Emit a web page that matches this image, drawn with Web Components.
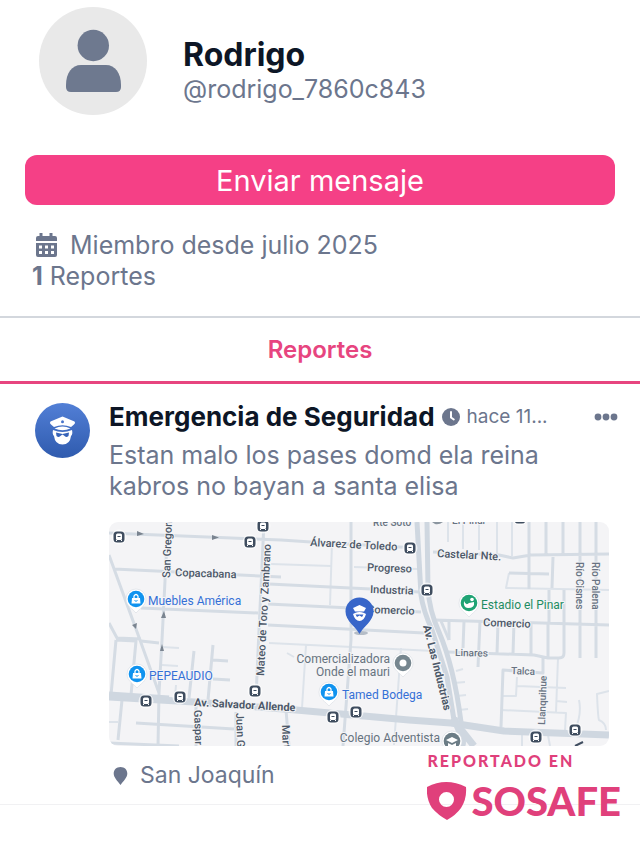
<!DOCTYPE html>
<html lang="es">
<head>
<meta charset="UTF-8">
<meta name="viewport" content="width=device-width, initial-scale=1">
<title>Rodrigo - SOSAFE</title>
<style>
body {
  margin: 0;
  background-color: #fff;
  color: #6c768d;
  font-family: Inter, "Liberation Sans", sans-serif;
}

main {
  padding-bottom: 36px;
}
</style>
</head>
<body>

<template id="profile-header">
<style>
  :host {
    display: flex;
    align-items: center;
    gap: 36px;
    padding: 7px 39px 0;
  }

  .avatar {
    flex: none;
    width: 108px;
    height: 108px;
  }

  .names {
    padding-top: 18px;
  }

  h1 {
    margin: 0;
    color: #0d1626;
    font-size: 32px;
    font-weight: 700;
    line-height: 38px;
  }

  p {
    margin: 0;
    font-size: 25px;
    line-height: 31px;
  }
</style>
<svg class="avatar" viewBox="0 0 108 108" aria-hidden="true">
<circle cx="54" cy="54" r="54" fill="#e9e9e9"/>
<circle cx="54.300" cy="38.500" r="15.700" fill="#6e798f"/>
<path d="M27 78C27 66 33 58 42 58H67C76 58 82 66 82 78V80Q82 85 77 85H32Q27 85 27 80Z" fill="#6e798f"/>
</svg>
<div class="names">
<h1><slot name="name"></slot></h1>
<p><slot name="handle"></slot></p>
</div>
</template>

<template id="action-button">
<style>
  :host {
    display: block;
    padding: 40px 25px 0;
  }

  button {
    display: block;
    width: 100%;
    height: 50px;
    padding: 0;
    border: 0;
    border-radius: 12px;
    background-color: #f54086;
    color: #fff;
    font: inherit;
    font-size: 29px;
    cursor: pointer;
  }
</style>
<button type="button"><slot></slot></button>
</template>

<template id="profile-facts">
<style>
  :host {
    display: block;
    padding: 25px 32px 24px;
    font-size: 25px;
    line-height: 31px;
  }

  .since {
    display: flex;
    align-items: center;
    gap: 12px;
    padding-left: 3px;
  }

  svg {
    width: 23px;
    height: 25px;
  }
</style>
<div class="since">
<svg viewBox="0 0 23 25" aria-hidden="true">
<path d="M4.500 0h3v3h7V0h3v3H20q2 0 2 2v3H1V5q0-2 2-2h1.500z" fill="#6c768d"/>
<path fill-rule="evenodd" d="M1 10h21v12q0 2-2 2H3q-2 0-2-2zM4 12.500v3h3v-3zM10 12.500v3h3v-3zM16 12.500v3h3v-3zM4 18v3h3v-3zM10 18v3h3v-3zM16 18v3h3v-3z" fill="#6c768d"/>
</svg>
<slot name="since"></slot>
</div>
<div><slot name="count"></slot></div>
</template>

<template id="profile-tabs">
<style>
  :host {
    display: block;
    border-top: 2px solid #d3d7dd;
    border-bottom: 3px solid #e7457f;
  }

  nav {
    display: flex;
  }

  a {
    flex: 1;
    color: #e7457f;
    font-size: 24px;
    font-weight: 600;
    line-height: 63px;
    text-align: center;
    text-decoration: none;
  }
</style>
<nav><a href="#reportes"><slot></slot></a></nav>
</template>

<template id="report-card">
<style>
  :host {
    display: flex;
    gap: 19px;
    position: relative;
    padding: 16px 31px 13px 35px;
    border-bottom: 1px solid #f1f1f3;
  }

  .category {
    flex: none;
    width: 55px;
    height: 55px;
    margin-top: 3px;
  }

  .body {
    flex: 1;
    min-width: 0;
  }

  header {
    display: flex;
    align-items: center;
    line-height: 34px;
  }

  h2 {
    margin: 0;
    color: #0d1626;
    font-size: 26px;
    font-weight: 700;
    line-height: 34px;
    white-space: nowrap;
  }

  .clock {
    flex: none;
    width: 18px;
    height: 18px;
    margin: 0 7px;
  }

  time {
    font-size: 19px;
    white-space: nowrap;
  }

  button {
    display: flex;
    margin-left: auto;
    margin-right: -9px;
    padding: 0;
    border: 0;
    background: none;
    cursor: pointer;
  }

  p {
    margin: 6px 0 20px;
    font-size: 25px;
    line-height: 31px;
  }

  footer {
    display: flex;
    align-items: center;
    gap: 12px;
    padding-top: 14px;
    padding-left: 4px;
    font-size: 23px;
    line-height: 31px;
  }
</style>
<svg class="category" viewBox="0 0 55 55" aria-hidden="true">
<defs>
<linearGradient id="sky" x1="0" y1="0" x2="0" y2="1">
<stop offset="0" stop-color="#527fd6"/>
<stop offset="1" stop-color="#2f5bae"/>
</linearGradient>
</defs>
<circle cx="27.500" cy="27.500" r="27.500" fill="url(#sky)"/>
<path d="M27.500 13.500L39.500 18.500Q41 20 39 21.500L36 24Q27.500 20.500 19 24L16 21.500Q14 20 15.500 18.500Z" fill="#fff"/>
<path d="M19.500 25.500Q27.500 21.500 35.500 25.500Q27.500 29 19.500 25.500Z" fill="#fff"/>
<path d="M18 27Q27.500 31 37 27Q38 31 36 33Q35 41.500 27.500 41.500Q20 41.500 19 33Q17 31 18 27Z" fill="#fff"/>
<path d="M21 29.500L27.500 31L34 29.500L33.500 33Q31 35 29 32.500L27.500 31.500L26 32.500Q24 35 21.500 33Z" fill="#3763b9"/>
<circle cx="27.500" cy="18.800" r="1.500" fill="#4774cb"/>
</svg>
<div class="body">
<header>
<h2><slot name="title"></slot></h2>
<svg class="clock" viewBox="0 0 18 18" aria-hidden="true">
<circle cx="9" cy="9" r="9" fill="#6c768d"/>
<path d="M9 4v5.500l2.800 2" fill="none" stroke="#fff" stroke-width="2" stroke-linecap="round"/>
</svg>
<time><slot name="time"></slot></time>
<button type="button" aria-label="Opciones">
<svg width="24" height="8" viewBox="0 0 24 8" fill="#6c768d">
<circle cx="4" cy="4" r="3.400"/><circle cx="12" cy="4" r="3.400"/><circle cx="20" cy="4" r="3.400"/>
</svg>
</button>
</header>
<p><slot name="text"></slot></p>
<slot name="map"></slot>
<footer>
<svg width="15" height="20" viewBox="0 0 15 20" aria-hidden="true">
<path d="M7.500 1C11.500 1 14.300 3.800 14.300 7.500C14.300 11.500 10.500 15 7.500 19C4.500 15 .7 11.500 .7 7.500C.7 3.800 3.500 1 7.500 1Z" fill="#6c768d"/>
</svg>
<slot name="place"></slot>
</footer>
</div>
<slot name="badge"></slot>
</template>

<template id="report-map">
<style>
  :host {
    display: block;
    overflow: hidden;
    border-radius: 9px;
    background-color: #f4f4f6;
    font-family: Roboto, "Liberation Sans", sans-serif;
  }

  svg {
    display: block;
    width: 100%;
    height: auto;
  }

  .roads path {
    fill: none;
    stroke: #d5dce4;
    stroke-width: 3px;
    stroke-linejoin: round;
  }

  .roads .thin {
    stroke: #dde3ea;
    stroke-width: 2px;
  }

  .roads .wide {
    stroke: #cfd7e0;
    stroke-width: 7px;
  }

  .roads .lane {
    stroke-width: 5px;
  }

  text {
    fill: #4c5868;
    stroke: #f4f4f6;
    stroke-width: 2px;
    paint-order: stroke;
    font-size: 11px;
    font-weight: 500;
  }

  .main {
    font-weight: 700;
  }

  .minor {
    fill: #687382;
    font-size: 10px;
  }

  .place,
  .shop,
  .park {
    font-size: 12px;
    font-weight: 400;
  }

  .place {
    fill: #66737f;
  }

  .shop {
    fill: #3470d6;
  }

  .park {
    fill: #1f8c62;
  }
</style>
<svg viewBox="0 0 500 224" role="img" aria-label="Mapa">
<defs>
<g id="stop">
<circle r="7.500" fill="#fff" opacity=".7"/>
<rect x="-5.500" y="-5.500" width="11" height="11" rx="3.500" fill="#3f4d5f"/>
<rect x="-3" y="-3.500" width="6" height="6.500" rx="1.500" fill="#fff"/>
<path d="M-2 -1.500h4v2h-4zM-2.500 3v1M2.500 3v1" fill="#3f4d5f" stroke="#fff"/>
</g>
<g id="pin">
<path d="M0 13C-3 9 -10 6 -10 -1A10 10 0 0 1 10 -1C10 6 3 9 0 13Z" fill="#fff" stroke="#d7dce2" stroke-width=".6"/>
<circle cy="-1" r="8.300"/>
</g>
<g id="bag">
<use href="#pin" fill="#1093ef"/>
<path d="M-4 -2H4L4.500 3.500H-4.500Z" fill="#fff"/>
<path d="M-2 -1.500V-4Q0 -7 2 -4V-1.500" fill="none" stroke="#fff" stroke-width="1.300"/>
<path d="M-1.500 .5Q0 2 1.500 .5" fill="none" stroke="#1093ef"/>
</g>
</defs>

<g class="roads">
<path class="thin" d="M162 42L222 44M223 21L221 83M245 45L309 47M197 123L193 186M292 126L285 223M160 121L325 129M53 125L70 126M53 143L69 144M67 163L66 175M0 200L9 200M185 135L178 131"/>
<path class="thin" d="M339 0V20M354 0V27M370 0V28M388 0V32M403 0V34M347 149L354 147M345 161L356 160M348 174L357 173M350 188L359 187M400 51L397 66L500 68M408 155L407 174H394M408 164L457 166M449 136L447 190M392 188L457 191L456 208M447 179L458 180M470 178Q473 192 466 208M500 169L488 172Q489 196 490 198Q497 201 497 208M413 213V224M439 213L441 224"/>
<path d="M0 11L172 18L202 20L308 26M0 33L31 118L50 171M5 47L172 55M59 0L53 118L50 171L49 224M32 86L149 91M0 101L8 116L32 117M155 0L150 108L147 175M160 62L262 67L310 70M159 82L242 86L312 90M159 103L315 111"/>
<path d="M242 0V118L239 158L234 224M7 118L2 173M7 118L27 119L22 173M32 119L50 121M13 178L9 218M0 221L70 224M27 201L125 207M85 129L80 176M104 123L99 178M104 138L119 139M104 157L121 158M177 188L180 224M127 190V224M87 180V224"/>
<path d="M324 30L390 33L404 36L422 33L500 32M420 0V67M437 0V32M454 0V32M471 0V136M487 0V136M444 35L443 66M400 51L440 52M440 68V100M325 98L500 103M332 99L340 118"/>
<path d="M340 99V118M355 99L354 126M371 99L369 145M389 100L388 132M405 100L404 132M422 101V132M439 101V136M455 68V131Q455 136 450 136L439 136L425 133L339 130M434 136V151L394 148L392 205"/>
<path class="wide lane" d="M308 0L312 73Q314 88 323 108L338 155L345 198M318 0L319 66Q320 88 330 110Q345 145 352 200"/>
<path class="wide" d="M0 175L85 180L187 188L300 198L342 201L395 209L500 213"/>
<path class="wide" d="M0 173L60 177M345 196L350 208Q356 222 352 224M350 205L365 224"/>
</g>

<g fill="#7a8490">
<path d="M28 9L35 12L28 14ZM103 13L110 15.500L103 18ZM52 96L55 89L57 96ZM23 103L28 101L27 107ZM51 129L53 122L55 129Z"/>
</g>

<text class="minor" x="264" y="4">Rte Soto</text>
<text class="minor" x="343" y="2">El Pinar</text>
<text transform="translate(201 24) rotate(3)">Álvarez de Toledo</text>
<text transform="translate(258 49) rotate(2)">Progreso</text>
<text transform="translate(261 71) rotate(2)">Industria</text>
<text transform="translate(258 91) rotate(2)">Comercio</text>
<text transform="translate(66 54) rotate(2)">Copacabana</text>
<text transform="translate(61 56) rotate(-88)">San Gregorio</text>
<text transform="translate(155 154) rotate(-87)">Mateo de Toro y Zambrano</text>
<text transform="translate(328 35) rotate(3)">Castelar Nte.</text>
<text transform="translate(374 104) rotate(2)">Comercio</text>
<text class="minor" transform="translate(467 40) rotate(90)">Río Cisnes</text>
<text class="minor" transform="translate(483 40) rotate(90)">Río Palena</text>
<text class="main" transform="translate(314 104) rotate(76)">Av. Las Industrias</text>
<text class="minor" transform="translate(346 134) rotate(1)">Linares</text>
<text class="minor" transform="translate(402 152) rotate(2)">Talca</text>
<text class="minor" transform="translate(436 203) rotate(-88)">Llanquihue</text>
<text class="main" transform="translate(85 184) rotate(3)">Av. Salvador Allende</text>
<text transform="translate(85 188) rotate(88)">Gaspar</text>
<text transform="translate(127 191) rotate(88)">Juan G</text>
<text transform="translate(173 203) rotate(88)">Martí</text>

<text class="shop" x="39" y="83">Muebles América</text>
<text class="shop" x="40" y="158">PEPEAUDIO</text>
<text class="shop" x="233" y="177">Tamed Bodega</text>
<text class="park" x="372" y="87">Estadio el Pinar</text>
<text class="place" x="281" y="141" text-anchor="end">Comercializadora</text>
<text class="place" x="281" y="154" text-anchor="end">Onde el mauri</text>
<text class="place" x="331" y="220" text-anchor="end">Colegio Adventista</text>

<use href="#stop" x="10" y="15"/>
<use href="#stop" x="141" y="20"/>
<use href="#stop" x="154" y="4"/>
<use href="#stop" x="301" y="26"/>
<use href="#stop" x="318" y="68"/>
<use href="#stop" x="411" y="-4"/>
<use href="#stop" x="37" y="179"/>
<use href="#stop" x="71" y="175"/>
<use href="#stop" x="146" y="169"/>
<use href="#stop" x="224" y="195"/>
<use href="#stop" x="247" y="190"/>
<use href="#stop" x="427" y="215"/>
<use href="#stop" x="466" y="208"/>
<path d="M466 224L474 220" stroke="#3f4d5f" stroke-width="2"/>
<path d="M323 0H334Q330 3 326 2Z" fill="#8b959f"/>

<use href="#bag" x="27" y="78"/>
<use href="#bag" x="28" y="153"/>
<use href="#bag" x="220" y="171"/>
<use href="#pin" x="360" y="82" fill="#1fa374"/>
<path d="M355 79Q357 84 360 81L365 80Q366 86 359 86Q354 86 355 79Z" fill="#fff"/>
<circle cx="363" cy="77.500" r="1.800" fill="#fff"/>
<use href="#pin" x="294" y="142" fill="#76868f"/>
<circle cx="294" cy="141" r="3.500" fill="#fff"/>
<use href="#pin" x="343" y="220" fill="#6c7d86"/>
<path d="M337 218L343 215L349 218L343 221Z M339 221L343 223L347 221V225H339Z" fill="#fff"/>

<ellipse cx="252" cy="111" rx="7" ry="2" fill="#b5bdc7"/>
<path d="M250.500 112C247 105 236.500 99 236.500 89.500A14 14 0 0 1 264.500 89.500C264.500 99 254 105 250.500 112Z" fill="#3866c9"/>
<path d="M250.500 83L257 86L255 89.500H246L244 86Z" fill="#fff"/>
<path d="M246 91Q250.500 89 255 91L257 92Q255 99 250.500 99Q246 99 244 92Z" fill="#fff"/>
<path d="M246.500 92.500H254.500L253 95L250.500 93.500L248 95Z" fill="#3866c9"/>
</svg>
</template>

<template id="sosafe-badge">
<style>
  :host {
    display: block;
    position: absolute;
    right: 19px;
    bottom: -17px;
    color: #e0407b;
    font-family: Lato, "Open Sans", sans-serif;
  }

  .caption {
    font-size: 16px;
    font-weight: 900;
    letter-spacing: 2px;
    line-height: 20px;
  }

  .brand {
    display: flex;
    align-items: center;
    gap: 4px;
    margin-top: 10px;
    font-size: 40px;
    font-weight: 900;
    line-height: 40px;
  }
</style>
<div class="caption"><slot></slot></div>
<div class="brand">
<svg width="40" height="40" viewBox="0 0 40 40" aria-hidden="true">
<path fill-rule="evenodd" d="M0 6Q19 -4 39 6Q40 18 34 27Q29 34 20 39Q11 34 5 27Q-1 18 0 6ZM19.500 11A7.500 7.500 0 1 0 19.500 26A7.500 7.500 0 1 0 19.500 11Z" fill="#e0407b"/>
</svg>
<slot name="brand"></slot>
</div>
</template>

<main>
<profile-header>
<span slot="name">Rodrigo</span>
<span slot="handle">@rodrigo_7860c843</span>
</profile-header>
<action-button>Enviar mensaje</action-button>
<profile-facts>
<span slot="since">Miembro desde julio 2025</span>
<span slot="count"><b>1</b> Reportes</span>
</profile-facts>
<profile-tabs>Reportes</profile-tabs>
<report-card id="reportes">
<span slot="title">Emergencia de Seguridad</span>
<span slot="time">hace 11...</span>
<span slot="text">Estan malo los pases domd ela reina kabros no bayan a santa elisa</span>
<report-map slot="map"></report-map>
<span slot="place">San Joaquín</span>
<sosafe-badge slot="badge">REPORTADO EN<span slot="brand">SOSAFE</span></sosafe-badge>
</report-card>
</main>

<script>
// every element clones the template that has its own name
class TemplateElement extends HTMLElement {
  connectedCallback() {
    if (this.shadowRoot) return;
    let shadowDom = this.attachShadow({ mode: "open" });
    let template = document.getElementById(this.localName);
    shadowDom.appendChild(template.content.cloneNode(true));
  }
}

customElements.define("profile-header", class extends TemplateElement {});
customElements.define("action-button", class extends TemplateElement {});
customElements.define("profile-facts", class extends TemplateElement {});
customElements.define("profile-tabs", class extends TemplateElement {});
customElements.define("report-card", class extends TemplateElement {});
customElements.define("report-map", class extends TemplateElement {});
customElements.define("sosafe-badge", class extends TemplateElement {});
</script>
</body>
</html>
